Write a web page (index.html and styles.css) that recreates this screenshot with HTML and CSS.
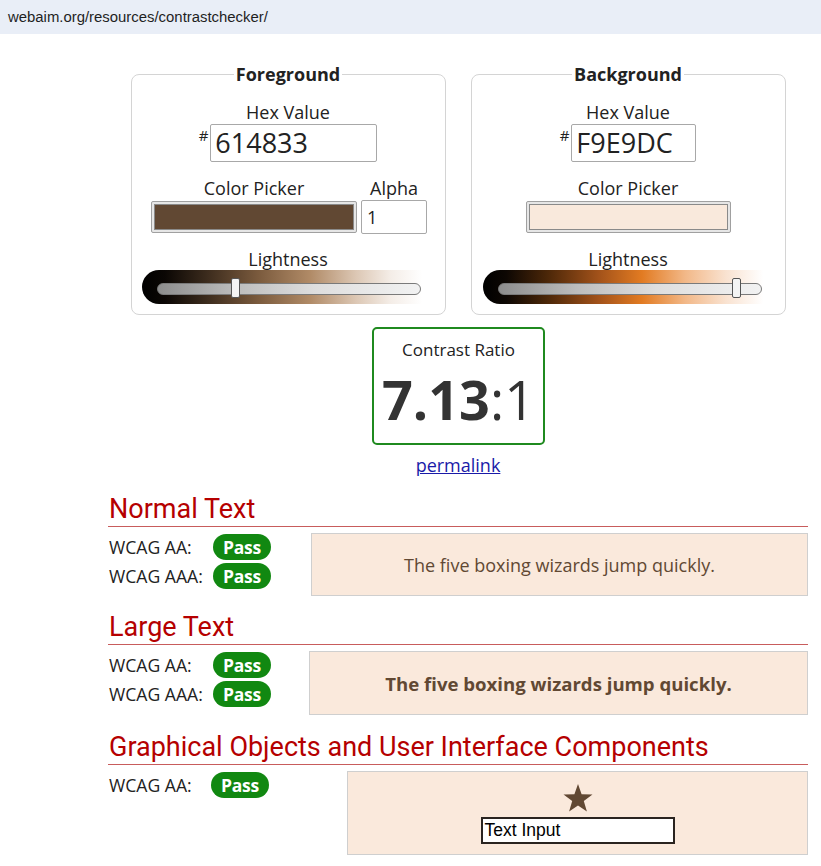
FILE: index.html
```html
<!DOCTYPE html>
<html lang="en">
<head>
<meta charset="utf-8">
<title>Contrast Checker</title>
<link rel="stylesheet" href="styles.css">
</head>
<body>
<div class="urlbar">webaim.org/resources/contrastchecker/</div>
<main class="page">
  <div class="pickers">
    <fieldset class="picker">
      <legend>Foreground</legend>
      <div class="label hexlabel">Hex Value</div>
      <div class="hexrow">
        <span class="hash">#</span>
        <div class="hexinput fg-hex">614833</div>
      </div>
      <div class="pickrow">
        <div class="pickcol fg-col">
          <div class="label">Color Picker</div>
          <div class="swatch fg-swatch"><div class="swatch-in fg-fill"></div></div>
        </div>
        <div class="pickcol alpha-col">
          <div class="label">Alpha</div>
          <div class="alpha">1</div>
        </div>
      </div>
      <div class="label light">Lightness</div>
      <div class="slider fg-slider">
        <div class="track"><div class="thumb fg-thumb"></div></div>
      </div>
    </fieldset>
    <fieldset class="picker">
      <legend>Background</legend>
      <div class="label hexlabel">Hex Value</div>
      <div class="hexrow">
        <span class="hash">#</span>
        <div class="hexinput bg-hex">F9E9DC</div>
      </div>
      <div class="pickrow">
        <div class="pickcol bg-col">
          <div class="label">Color Picker</div>
          <div class="swatch bg-swatch"><div class="swatch-in bg-fill"></div></div>
        </div>
      </div>
      <div class="label light">Lightness</div>
      <div class="slider bg-slider">
        <div class="track"><div class="thumb bg-thumb"></div></div>
      </div>
    </fieldset>
  </div>

  <div class="ratio">
    <div class="ratio-label">Contrast Ratio</div>
    <div class="ratio-value"><b>7.13</b>:1</div>
  </div>
  <div class="permalink"><a href="#">permalink</a></div>

  <h2 class="section">Normal Text</h2>
  <div class="result normal">
    <div class="checks">
      <div class="check"><span class="wcag">WCAG AA:</span><span class="pass">Pass</span></div>
      <div class="check"><span class="wcag">WCAG AAA:</span><span class="pass">Pass</span></div>
    </div>
    <div class="sample sample-normal">The five boxing wizards jump quickly.</div>
  </div>

  <h2 class="section section-tight">Large Text</h2>
  <div class="result large">
    <div class="checks">
      <div class="check"><span class="wcag">WCAG AA:</span><span class="pass">Pass</span></div>
      <div class="check"><span class="wcag">WCAG AAA:</span><span class="pass">Pass</span></div>
    </div>
    <div class="sample sample-large">The five boxing wizards jump quickly.</div>
  </div>

  <h2 class="section">Graphical Objects and User Interface Components</h2>
  <div class="result graphic">
    <div class="checks">
      <div class="check"><span class="wcag wcag-g">WCAG AA:</span><span class="pass">Pass</span></div>
    </div>
    <div class="sample sample-graphic">
      <svg class="star" width="30" height="28" viewBox="0 0 30 28" aria-hidden="true">
        <polygon points="15,0 18.6,10.3 29.5,10.5 20.8,17.1 23.9,27.6 15,21.4 6.1,27.6 9.2,17.1 0.5,10.5 11.4,10.3" fill="#614833"/>
      </svg>
      <div class="textinput">Text Input</div>
    </div>
  </div>
</main>
</body>
</html>
```

FILE: styles.css
```css
* { box-sizing: border-box; }
html, body { margin: 0; padding: 0; background: #fff; }
body {
  font-family: "Open Sans", "Noto Sans", sans-serif;
  color: #222;
}
.urlbar {
  height: 34px;
  background: #e9eef7;
  font-family: "Liberation Sans", Arial, sans-serif;
  font-size: 14.9px;
  line-height: 34px;
  padding-left: 8px;
  color: #1f1f1f;
}
.page {
  width: 700px;
  margin-left: 108px;
  padding-top: 28px;
}
.pickers {
  display: flex;
  justify-content: center;
  gap: 25px;
}
.picker {
  margin: 0;
  padding: 0 0 10px;
  min-width: 0;
  width: 315px;
  border: 1px solid #d4d4d4;
  border-radius: 8px;
  display: flex;
  flex-direction: column;
  align-items: center;
}
.picker legend {
  margin: 0 auto;
  padding: 0 2px;
  font-weight: 700;
  font-size: 18px;
  line-height: 24px;
  color: #222;
}
.label {
  font-size: 18px;
  line-height: 24px;
  color: #222;
  text-align: center;
}
.hexlabel { margin-top: 14px; }
.hexrow {
  display: flex;
  align-items: flex-start;
}
.hash {
  font-size: 15px;
  line-height: 15px;
  margin-top: 4px;
  margin-right: 2px;
}
.hexinput {
  height: 38px;
  border: 1px solid #a8a8a8;
  border-radius: 2px;
  font-size: 27px;
  line-height: 36px;
  padding-left: 4px;
  color: #222;
}
.fg-hex { width: 167px; }
.bg-hex { width: 125px; }
.pickrow {
  display: flex;
  gap: 4px;
  margin-top: 14px;
  height: 58px;
}
.pickcol {
  display: flex;
  flex-direction: column;
  align-items: center;
}
.fg-col { width: 206px; margin-left: 2px; }
.bg-col { width: 205px; }
.alpha-col { width: 66px; }
.swatch {
  width: 100%;
  height: 32px;
  margin-top: 1px;
  border: 1px solid #a0a0a0;
  background: #e6e6e6;
  border-radius: 2px;
  padding: 2px;
}
.swatch-in {
  width: 100%;
  height: 100%;
  border: 1px solid #8a8a8a;
}
.fg-fill { background: #614833; }
.bg-fill { background: #f9e9dc; }
.alpha {
  width: 66px;
  height: 34px;
  border: 1px solid #a8a8a8;
  border-radius: 2px;
  font-size: 18px;
  line-height: 32px;
  padding-left: 5px;
}
.light {
  margin-top: 14px;
  line-height: 22px;
}
.slider {
  position: relative;
  width: 289px;
  height: 34px;
  border-radius: 17px 0 0 17px;
  padding: 13px 10px 0 15px;
}
.fg-slider {
  margin-right: 4px;
  background: linear-gradient(to right, #000 0%, #0b0704 8%, #3a2a1c 22%, #7a5a3d 40%, #b08a66 58%, #dcc7b4 74%, #f4ede7 86%, #ffffff 97%);
}
.bg-slider {
  margin-left: -2px;
  background: linear-gradient(to right, #000 0%, #0d0703 8%, #4a2608 22%, #a2521a 40%, #e27b22 55%, #f2b888 70%, #f9e2d0 84%, #ffffff 97%);
}
.track {
  position: relative;
  height: 12px;
  border: 1px solid #7a7a7a;
  border-radius: 6px;
  background: linear-gradient(to right, #8d8d8d 0%, #bdbdbd 30%, #dedede 60%, #f2f2f2 100%);
}
.thumb {
  position: absolute;
  top: -6px;
  width: 9px;
  height: 20px;
  background: #f4f4f4;
  border: 1px solid #555;
  border-radius: 2px;
}
.fg-thumb { left: 73px; }
.bg-thumb { left: 233px; }

.ratio {
  width: 173px;
  height: 118px;
  margin: 12px 0 0 264px;
  border: 2px solid #1f8a1f;
  border-radius: 5px;
  text-align: center;
  padding-top: 10px;
}
.ratio-label {
  font-size: 17px;
  line-height: 22px;
  color: #222;
}
.ratio-value {
  margin-top: 8px;
  font-size: 54px;
  line-height: 60px;
  color: #333;
}
.ratio-value b { font-weight: 700; }
.permalink {
  margin-top: 8px;
  text-align: center;
  font-size: 18px;
  line-height: 24px;
}
.permalink a { color: #1a1aa8; text-decoration: underline; }

.section {
  margin: 16px 0 0;
  font-family: Roboto, "Liberation Sans", sans-serif;
  font-weight: 400;
  font-size: 27px;
  line-height: 33px;
  color: #b50000;
  border-bottom: 1px solid #c85c5c;
  padding-left: 1px;
}
.section-tight { margin-top: 15px; }
.result {
  display: flex;
  margin-top: 7px;
}
.checks {
  display: flex;
  flex-direction: column;
  gap: 3px;
}
.normal .checks { width: 203px; }
.large .checks { width: 201px; }
.graphic .checks { width: 239px; }
.check {
  display: flex;
  align-items: center;
  height: 26px;
}
.wcag {
  width: 105px;
  font-size: 17.6px;
  color: #222;
  padding-left: 1px;
}
.wcag-g { width: 103px; }
.pass {
  display: inline-block;
  height: 26px;
  width: 58px;
  border-radius: 13px;
  background: #118811;
  color: #fff;
  font-weight: 700;
  font-size: 17.5px;
  line-height: 26px;
  text-align: center;
  letter-spacing: -0.3px;
}
.sample {
  flex: 1;
  background: #fae9dc;
  border: 1px solid #cfcfcf;
  color: #614833;
  display: flex;
  align-items: center;
  justify-content: center;
}
.sample-normal {
  height: 63px;
  margin-top: -1px;
  font-size: 18px;
}
.sample-large {
  height: 64px;
  margin-top: -1px;
  font-size: 18.6px;
  font-weight: 700;
}
.sample-graphic {
  height: 84px;
  margin-top: -1px;
  flex-direction: column;
  justify-content: flex-start;
  padding-top: 12px;
}
.star { display: block; }
.textinput {
  margin-top: 5px;
  width: 194px;
  height: 27px;
  border: 2px solid #2a2420;
  background: #fff;
  color: #000;
  font-family: "Liberation Sans", Arial, sans-serif;
  font-size: 17.5px;
  line-height: 23px;
  padding-left: 2px;
}
```
